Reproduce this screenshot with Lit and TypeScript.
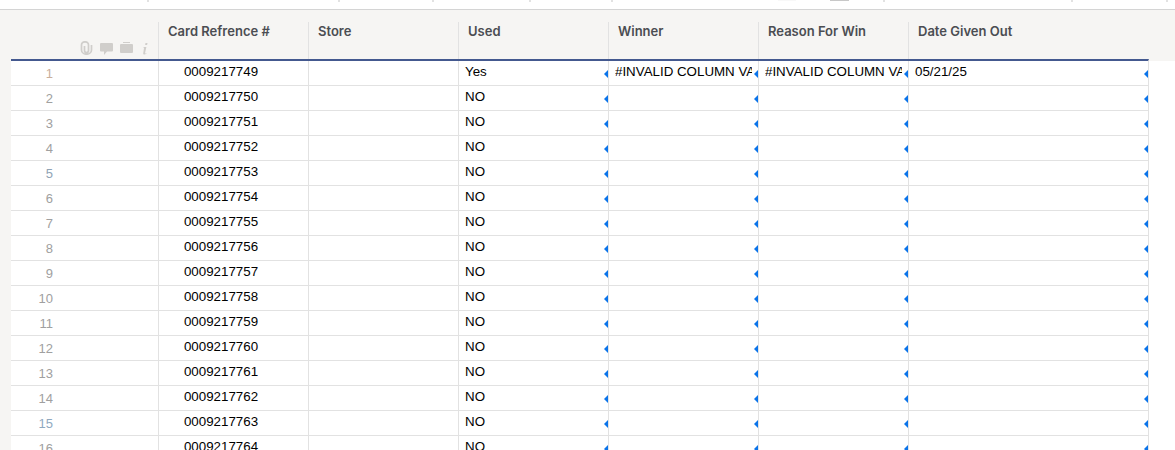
import { LitElement, html, css } from "lit";
import { customElement } from "lit/decorators.js";

const cols = [
  { title: "Card Refrence #", w: 150 },
  { title: "Store", w: 150 },
  { title: "Used", w: 150 },
  { title: "Winner", w: 150 },
  { title: "Reason For Win", w: 150 },
  { title: "Date Given Out", w: 240 },
];

const numColors: Record<number, string> = { 1: "#c9ae9b", 5: "#8fa3b5", 15: "#8fa9bf" };

const marks = [
  { x: 147, w: 2, h: 2, c: "#e2e2e2" },
  { x: 338, w: 2, h: 2, c: "#e2e2e2" },
  { x: 432, w: 2, h: 2, c: "#e2e2e2" },
  { x: 529, w: 2, h: 2, c: "#e2e2e2" },
  { x: 611, w: 2, h: 2, c: "#e2e2e2" },
  { x: 778, w: 18, h: 1, c: "#f8f8f8" },
  { x: 830, w: 19, h: 1, c: "#c8c8c8" },
  { x: 883, w: 2, h: 2, c: "#e2e2e2" },
  { x: 1071, w: 2, h: 2, c: "#e2e2e2" },
  { x: 1166, w: 2, h: 2, c: "#e2e2e2" },
];

@customElement("app-root")
export class AppRoot extends LitElement {
  static styles = css`
    :host { display: block; width: 1175px; height: 450px; overflow: hidden; background: #fff; font-family: "Liberation Sans", Arial, sans-serif; }
    .top { height: 9px; border-bottom: 1px solid #d4d4d4; display: flex; align-items: flex-start; }
    .top i { display: block; flex: none; }
    .head { height: 49px; background: #f6f5f3; display: flex; padding-left: 11px; }
    .corner { width: 147px; display: flex; align-items: flex-end; gap: 7px; padding: 0 0 4px 69px; box-sizing: border-box; }
    .corner svg { display: block; flex: none; }
    .corner .case { margin-bottom: 2px; }
    .hc { box-sizing: border-box; border-left: 1px solid #e2e2e2; margin-top: 12px; padding: 0 0 0 9px; font: 600 13px/17px Inter, "Liberation Sans", sans-serif; color: #4b4d52; }
    .hc span { display: block; margin-top: 1px; }
    .bodywrap { display: flex; height: 391px; background: linear-gradient(#f6f5f3 2px, #fff 2px); }
    .strip { width: 11px; flex: none; background: #f6f5f3; }
    .table { width: 1138px; flex: none; background: #fff; border-top: 2px solid #44598f; border-right: 1px solid #e2e2e2; box-sizing: border-box; height: 391px; overflow: hidden; }
    .row { display: flex; height: 25px; box-sizing: border-box; border-bottom: 1px solid #e2e2e2; }
    .num { width: 147px; flex: none; box-sizing: border-box; padding-right: 105px; text-align: right; font-size: 13px; line-height: 26px; color: #a0a0a0; }
    .cell { position: relative; flex: none; box-sizing: border-box; border-left: 1px solid #e2e2e2; font-size: 13.33px; line-height: 21px; color: #000; padding-left: 6px; white-space: nowrap; overflow: hidden; }
    .cell.center { text-align: center; padding: 0 25px 0 0; }
    .cell .clip { display: block; overflow: hidden; width: 137px; }
    .tri { position: absolute; right: 0; top: 8.500px; width: 0; height: 0; border-style: solid; border-width: 4px 4.500px 4px 0; border-color: transparent #0b74ea transparent transparent; }
  `;

  private icons() {
    const c = "#d0cecb";
    return html`
      <svg width="13" height="14" viewBox="0 0 13 14" fill="none" stroke="${c}" stroke-width="1.7">
        <path d="M11.500 4 V9 a5 4.200 0 0 1 -10 0 V4 a3.500 3.200 0 0 1 7 0 V9.500 a2 2 0 0 1 -4 0 V5"></path>
      </svg>
      <svg width="13" height="12" viewBox="0 0 13 12" fill="${c}"><path d="M1 0h11a1 1 0 0 1 1 1v6.500a1 1 0 0 1-1 1H7L4 12V8.500H1a1 1 0 0 1-1-1V1a1 1 0 0 1 1-1z"></path></svg>
      <svg class="case" width="13" height="11" viewBox="0 0 13 11" fill="${c}"><path d="M3 0h7v1H3zM1 2h11a1 1 0 0 1 1 1v7a1 1 0 0 1-1 1H1a1 1 0 0 1-1-1V3a1 1 0 0 1 1-1z"></path></svg>
      <svg width="8" height="12" viewBox="0 0 8 12" fill="${c}"><path d="M5.500 0h2l-.4 2h-2zM4.200 4h2.200L5 10.200c0 .4.300.4 1.200-.3l.3.500c-1.200 1-3.500 1.800-3.300.1L4 5H3z"></path></svg>
    `;
  }

  render() {
    const rows = Array.from({ length: 16 }, (_, i) => i);
    let pos = 0;
    return html`
      <div class="top">
        ${marks.map((m) => {
          const gap = m.x - pos;
          pos = m.x + m.w;
          return html`<i style="margin-left:${gap}px;width:${m.w}px;height:${m.h}px;background:${m.c}"></i>`;
        })}
      </div>
      <div class="head">
        <div class="corner">${this.icons()}</div>
        ${cols.map((c) => html`<div class="hc" style="width:${c.w}px"><span>${c.title}</span></div>`)}
      </div>
      <div class="bodywrap">
        <div class="strip"></div>
        <div class="table">
          ${rows.map((i) => html`
            <div class="row">
              <div class="num" style=${numColors[i + 1] ? `color:${numColors[i + 1]}` : ""}>${i + 1}</div>
              <div class="cell center" style="width:150px">${String(9217749 + i).padStart(10, "0")}</div>
              <div class="cell" style="width:150px"></div>
              <div class="cell" style="width:150px">${i === 0 ? "Yes" : "NO"}<span class="tri"></span></div>
              <div class="cell" style="width:150px"><span class="clip">${i === 0 ? "#INVALID COLUMN VALUE" : ""}</span><span class="tri"></span></div>
              <div class="cell" style="width:150px"><span class="clip">${i === 0 ? "#INVALID COLUMN VALUE" : ""}</span><span class="tri"></span></div>
              <div class="cell" style="width:240px">${i === 0 ? "05/21/25" : ""}<span class="tri"></span></div>
            </div>`)}
        </div>
      </div>
    `;
  }
}
